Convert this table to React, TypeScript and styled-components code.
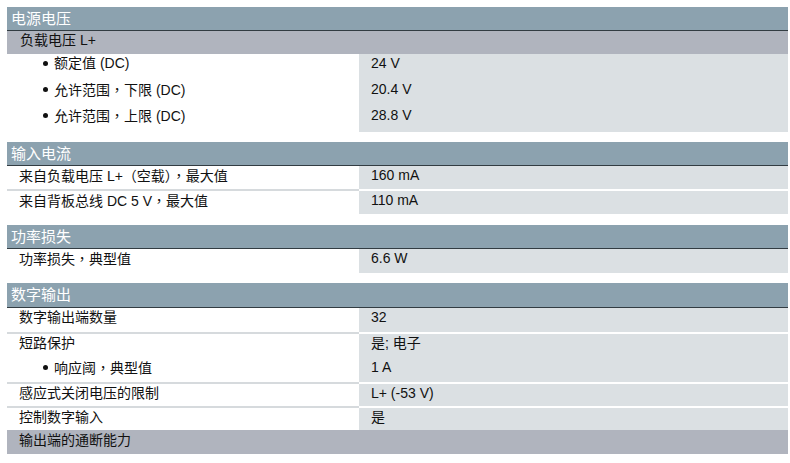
import React from "react";
import styled, { createGlobalStyle } from "styled-components";

const GlobalStyle = createGlobalStyle`
  html, body {
    margin: 0;
    padding: 0;
    background: #ffffff;
  }
  body {
    font-family: "Liberation Sans", "Noto Sans CJK SC", sans-serif;
    color: #111111;
  }
`;

type Line = { text: string; bullet?: boolean; h: number };
type Item = { label: Line[]; value: string[]; divider?: boolean };
type Section = {
  title: string;
  titleH: number;
  sub?: string;
  items: Item[];
  footer?: string;
  gap: number;
};

const sections: Section[] = [
  {
    title: "电源电压",
    titleH: 23,
    sub: "负载电压 L+",
    gap: 10,
    items: [
      { label: [{ text: "额定值 (DC)", bullet: true, h: 26 }], value: ["24 V"] },
      { label: [{ text: "允许范围，下限 (DC)", bullet: true, h: 26 }], value: ["20.4 V"] },
      { label: [{ text: "允许范围，上限 (DC)", bullet: true, h: 26 }], value: ["28.8 V"] },
    ],
  },
  {
    title: "输入电流",
    titleH: 23,
    gap: 11,
    items: [
      { label: [{ text: "来自负载电压 L+（空载），最大值", h: 23 }], value: ["160 mA"] },
      { label: [{ text: "来自背板总线 DC 5 V，最大值", h: 23 }], value: ["110 mA"], divider: true },
    ],
  },
  {
    title: "功率损失",
    titleH: 23,
    gap: 10,
    items: [{ label: [{ text: "功率损失，典型值", h: 24 }], value: ["6.6 W"] }],
  },
  {
    title: "数字输出",
    titleH: 24,
    gap: 0,
    items: [
      { label: [{ text: "数字输出端数量", h: 24 }], value: ["32"] },
      {
        label: [
          { text: "短路保护", h: 24 },
          { text: "响应阈，典型值", bullet: true, h: 24 },
        ],
        value: ["是; 电子", "1 A"],
        divider: true,
      },
      { label: [{ text: "感应式关闭电压的限制", h: 22 }], value: ["L+ (-53 V)"], divider: true },
      { label: [{ text: "控制数字输入", h: 22 }], value: ["是"], divider: true },
    ],
    footer: "输出端的通断能力",
  },
];

// full-width punctuation is drawn centred in the reference, as the TC face does
const withPunct = (text: string) =>
  text.split(/([，（）])/).map((part, i) =>
    /^[，（）]$/.test(part) ? <Punct key={i}>{part}</Punct> : part
  );

export default function App() {
  return (
    <>
      <GlobalStyle />
      <Page>
        {sections.map((s) => (
          <Block key={s.title} $gap={s.gap}>
            <Header $h={s.titleH}>{s.title}</Header>
            {s.sub && <SubBand>{s.sub}</SubBand>}
            {s.items.map((it, i) => (
              <Row key={i}>
                <Label $divider={!!it.divider}>
                  {it.label.map((l) => (
                    <TextLine key={l.text} $h={l.h} $indent={l.bullet ? 36 : 12}>
                      {l.bullet && <Bullet />}
                      <span>{withPunct(l.text)}</span>
                    </TextLine>
                  ))}
                </Label>
                <Value $divider={!!it.divider}>
                  {it.value.map((v, j) => (
                    <TextLine key={v} $h={it.label[j] ? it.label[j].h : 24} $indent={12}>
                      {v}
                    </TextLine>
                  ))}
                </Value>
              </Row>
            ))}
            {s.footer && <FooterBand>{s.footer}</FooterBand>}
          </Block>
        ))}
      </Page>
    </>
  );
}

const Page = styled.div`
  width: 781px;
  padding: 7px 2px 0 7px;
  display: flex;
  flex-direction: column;
`;

const Block = styled.section<{ $gap: number }>`
  display: flex;
  flex-direction: column;
  margin-bottom: ${(p) => p.$gap}px;
`;

const Header = styled.div<{ $h: number }>`
  height: ${(p) => p.$h}px;
  line-height: ${(p) => p.$h}px;
  background: #8ca2af;
  border-bottom: 1px solid #323c42;
  color: #ffffff;
  font-size: 15px;
  padding-left: 4px;
`;

const SubBand = styled.div`
  height: 23px;
  line-height: 18px;
  background: #b0b4be;
  font-size: 14px;
  padding-left: 13px;
`;

const FooterBand = styled.div`
  height: 24px;
  line-height: 20px;
  background: #b0b4be;
  font-size: 14px;
  padding-left: 12px;
`;

const Row = styled.div`
  display: grid;
  grid-template-columns: 352px 1fr;
`;

const Label = styled.div<{ $divider: boolean }>`
  display: flex;
  flex-direction: column;
  background: #ffffff;
  border-top: ${(p) => (p.$divider ? "2px solid #d6dadd" : "none")};
`;

const Value = styled.div<{ $divider: boolean }>`
  display: flex;
  flex-direction: column;
  background: #dbe0e3;
  border-top: ${(p) => (p.$divider ? "2px solid #ffffff" : "none")};
`;

const TextLine = styled.div<{ $h: number; $indent: number }>`
  display: flex;
  align-items: flex-start;
  height: ${(p) => p.$h}px;
  line-height: 18px;
  font-size: 14px;
  padding-left: ${(p) => p.$indent}px;
  white-space: nowrap;
`;

const Punct = styled.span`
  font-family: "Noto Sans CJK TC", sans-serif;
`;

const Bullet = styled.span`
  width: 5px;
  height: 5px;
  border-radius: 50%;
  background: #111111;
  margin: 7px 6px 0 0;
  flex-shrink: 0;
`;
